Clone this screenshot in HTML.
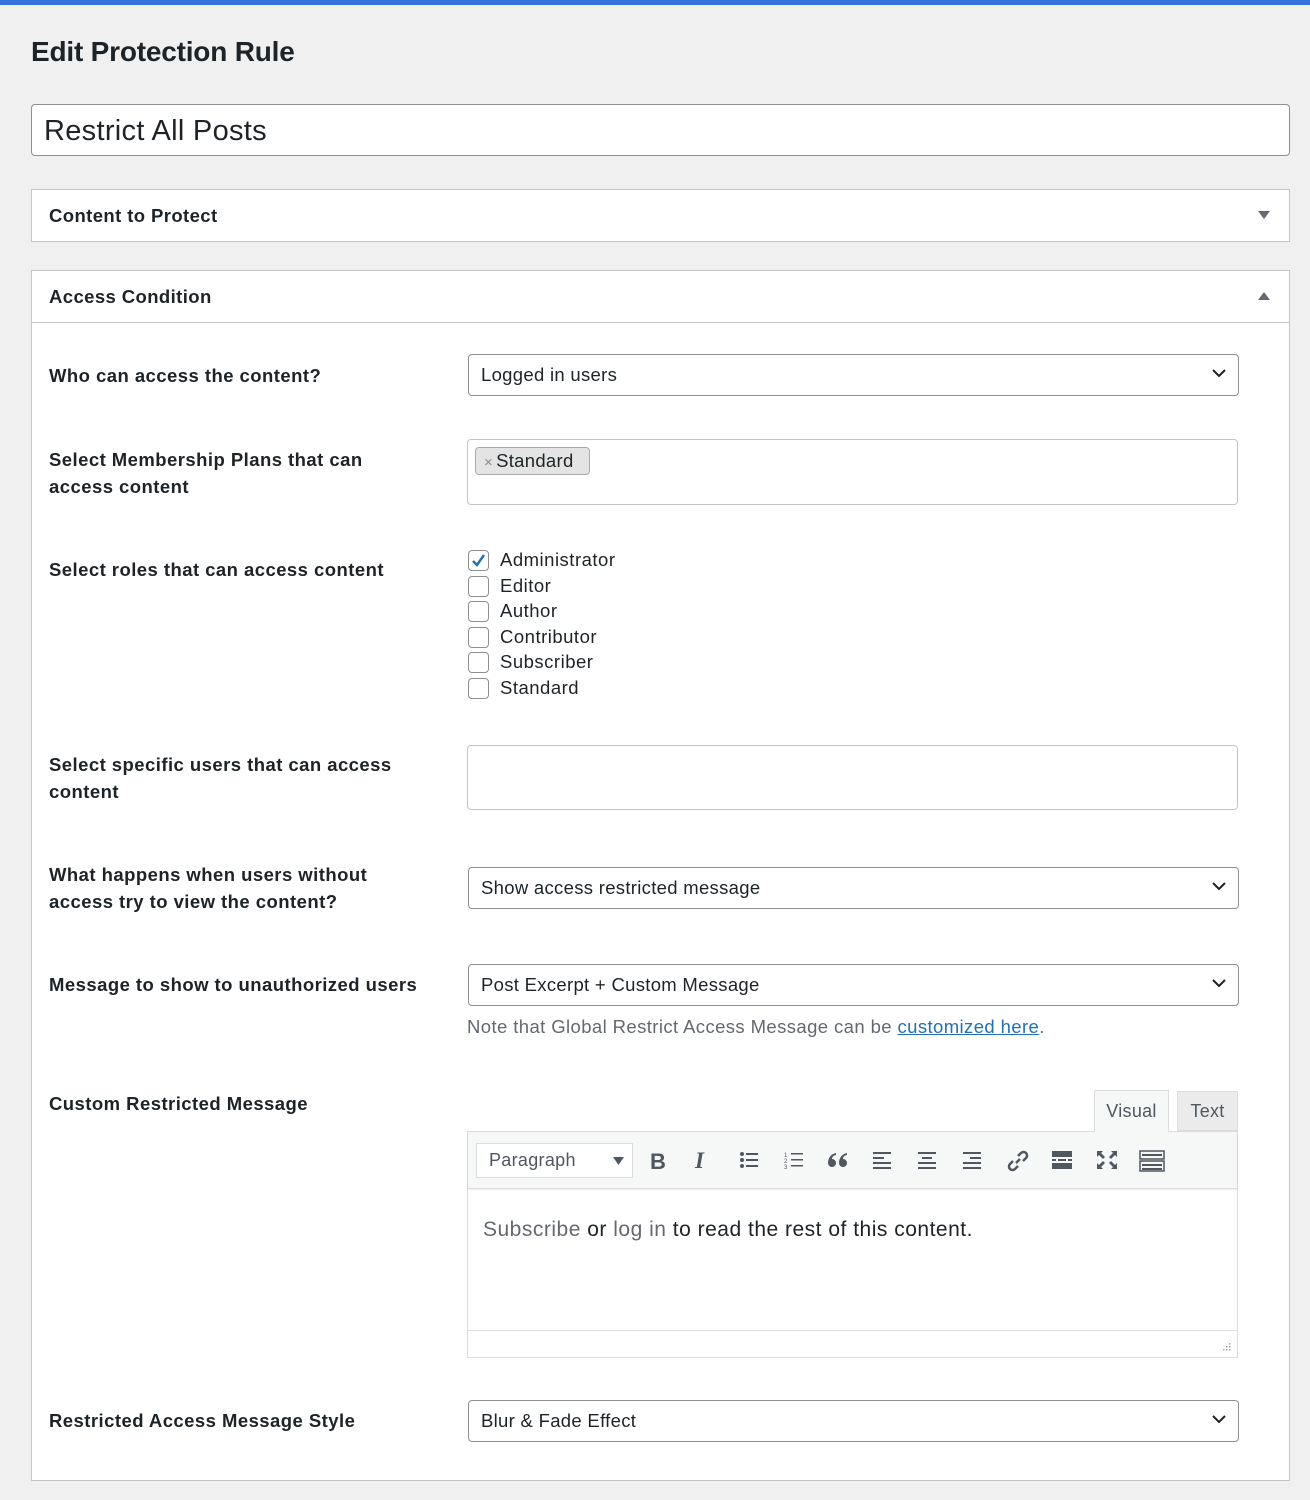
<!DOCTYPE html>
<html><head><meta charset="utf-8"><style>
*{box-sizing:border-box;margin:0;padding:0}
body{width:1310px;height:1500px;background:#f0f0f1;font-family:"Liberation Sans",sans-serif;color:#1d2327;position:relative;overflow:hidden;letter-spacing:0.3px}
.a{position:absolute}
.lbl{position:absolute;left:49px;font-size:18.5px;font-weight:bold;line-height:27px;color:#1d2327;letter-spacing:0.45px}
.sel{position:absolute;left:468px;width:771px;height:42px;border:1px solid #8c8f94;border-radius:4px;background:#fff;font-size:18.5px;padding:0 12px;line-height:40px}
.sel svg{position:absolute;right:12px;top:13px}
.box{position:absolute;left:467px;width:771px;border:1px solid #c3c4c7;border-radius:4px;background:#fff}
.cb{position:absolute;left:468px;width:21px;height:21px;border:1px solid #8c8f94;border-radius:4px;background:#fff}
.cbl{position:absolute;left:500px;font-size:18.5px;line-height:22px;letter-spacing:0.5px}
.tb svg{position:absolute;top:1150px}
</style></head><body>
<div class="a" style="left:0;top:0;width:1310px;height:5px;background:#3572de"></div>
<div class="a" style="left:31px;top:34px;font-size:28px;line-height:36px;font-weight:bold;letter-spacing:-0.2px">Edit Protection Rule</div>
<div class="a" style="left:31px;top:104px;width:1259px;height:52px;background:#fff;border:1px solid #8c8f94;border-radius:4px;font-size:29px;line-height:52px;padding-left:12px">Restrict All Posts</div>

<div class="a" style="left:31px;top:189px;width:1259px;height:53px;background:#fff;border:1px solid #c3c4c7"></div>
<div class="a" style="left:49px;top:202px;font-size:18.5px;line-height:27px;font-weight:bold;letter-spacing:0.4px">Content to Protect</div>
<svg class="a" style="left:1258px;top:211px" width="12" height="8"><path d="M0 0H12L6 8Z" fill="#646970"/></svg>

<div class="a" style="left:31px;top:270px;width:1259px;height:1211px;background:#fff;border:1px solid #c3c4c7"></div>
<div class="a" style="left:32px;top:322px;width:1257px;height:1px;background:#c3c4c7"></div>
<div class="a" style="left:49px;top:283px;font-size:18.5px;line-height:27px;font-weight:bold;letter-spacing:0.4px">Access Condition</div>
<svg class="a" style="left:1258px;top:292px" width="12" height="8"><path d="M0 8H12L6 0Z" fill="#646970"/></svg>

<div class="lbl" style="top:362px">Who can access the content?</div>
<div class="sel" style="top:354px">Logged in users<svg width="14" height="10"><path d="M1 2L7 8L13 2" stroke="#1d2327" stroke-width="2" fill="none"/></svg></div>

<div class="lbl" style="top:446px">Select Membership Plans that can<br>access content</div>
<div class="box" style="top:439px;height:66px"></div>
<div class="a" style="left:475px;top:447px;width:115px;height:28px;background:#e4e4e4;border:1px solid #aaa;border-radius:4px;font-size:18.5px;line-height:26px;padding-left:8px"><span style="color:#888;font-size:15px;margin-right:3px">×</span>Standard</div>

<div class="lbl" style="top:556px">Select roles that can access content</div>
<div class="cb" style="top:550px"><svg width="19" height="19" style="position:absolute;left:0;top:0"><path d="M4 10L8 14L15 4" stroke="#2271b1" stroke-width="2.5" fill="none"/></svg></div>
<div class="cbl" style="top:549px">Administrator</div>
<div class="cb" style="top:576px"></div><div class="cbl" style="top:575px">Editor</div>
<div class="cb" style="top:601px"></div><div class="cbl" style="top:600px">Author</div>
<div class="cb" style="top:627px"></div><div class="cbl" style="top:626px">Contributor</div>
<div class="cb" style="top:652px"></div><div class="cbl" style="top:651px">Subscriber</div>
<div class="cb" style="top:678px"></div><div class="cbl" style="top:677px">Standard</div>

<div class="lbl" style="top:751px">Select specific users that can access<br>content</div>
<div class="box" style="top:745px;height:65px"></div>

<div class="lbl" style="top:861px">What happens when users without<br>access try to view the content?</div>
<div class="sel" style="top:867px">Show access restricted message<svg width="14" height="10"><path d="M1 2L7 8L13 2" stroke="#1d2327" stroke-width="2" fill="none"/></svg></div>

<div class="lbl" style="top:971px">Message to show to unauthorized users</div>
<div class="sel" style="top:964px">Post Excerpt + Custom Message<svg width="14" height="10"><path d="M1 2L7 8L13 2" stroke="#1d2327" stroke-width="2" fill="none"/></svg></div>
<div class="a" style="left:467px;top:1014px;font-size:18.5px;line-height:26px;color:#646970;letter-spacing:0.4px">Note that Global Restrict Access Message can be <span style="color:#2271b1;text-decoration:underline">customized here</span>.</div>

<div class="lbl" style="top:1090px">Custom Restricted Message</div>
<div class="a" style="left:1094px;top:1090px;width:75px;height:42px;background:#f6f7f7;border:1px solid #dcdcde;border-bottom:none;font-size:18px;line-height:40px;text-align:center;color:#50575e;z-index:2">Visual</div>
<div class="a" style="left:1177px;top:1091px;width:61px;height:40px;background:#ebebeb;border:1px solid #dcdcde;font-size:18px;line-height:38px;text-align:center;color:#50575e">Text</div>
<div class="a" style="left:467px;top:1131px;width:771px;height:227px;border:1px solid #dcdcde;background:#fff"></div>
<div class="a" style="left:468px;top:1132px;width:769px;height:57px;background:#f6f7f7;border-bottom:1px solid #dcdcde;box-shadow:0 1px 2px rgba(0,0,0,.08)"></div>
<div class="a" style="left:476px;top:1143px;width:157px;height:35px;background:#fff;border:1px solid #dcdcde;font-size:18px;line-height:33px;padding-left:12px;color:#50575e">Paragraph<svg width="11" height="8" style="position:absolute;right:8px;top:13px"><path d="M0 0H11L5.5 8Z" fill="#50575e"/></svg></div>
<div class="a" style="left:650px;top:1149px;font-size:22px;font-weight:bold;color:#50575e">B</div>
<div class="a" style="left:695px;top:1148px;font-size:23px;font-style:italic;font-weight:bold;font-family:'Liberation Serif',serif;color:#50575e">I</div>
<div class="tb" style="color:#50575e">
<svg style="left:739px" width="20" height="20"><g fill="#50575e"><circle cx="3" cy="4" r="2"/><circle cx="3" cy="10" r="2"/><circle cx="3" cy="16" r="2"/><rect x="7" y="3" width="12" height="2"/><rect x="7" y="9" width="12" height="2"/><rect x="7" y="15" width="12" height="2"/></g></svg>
<svg style="left:784px" width="20" height="20"><g fill="#50575e"><text x="0" y="7" font-size="6">1</text><text x="0" y="13" font-size="6">2</text><text x="0" y="19" font-size="6">3</text><rect x="7" y="3" width="12" height="1.5"/><rect x="7" y="9" width="12" height="1.5"/><rect x="7" y="15" width="12" height="1.5"/></g></svg>
<svg style="left:827px;top:1151px" width="22" height="18"><g fill="#50575e"><path d="M9 2C4 3 1 7 1 12a4 4 0 1 0 4-4C5 6 7 4 9 4Z"/><path d="M20 2C15 3 12 7 12 12a4 4 0 1 0 4-4C16 6 18 4 20 4Z"/></g></svg>
<svg style="left:872px" width="20" height="20"><g fill="#50575e"><rect x="1" y="2" width="18" height="2"/><rect x="1" y="7" width="11" height="2"/><rect x="1" y="12" width="18" height="2"/><rect x="1" y="17" width="18" height="2"/></g></svg>
<svg style="left:917px" width="20" height="20"><g fill="#50575e"><rect x="1" y="2" width="18" height="2"/><rect x="5" y="7" width="10" height="2"/><rect x="1" y="12" width="18" height="2"/><rect x="1" y="17" width="18" height="2"/></g></svg>
<svg style="left:962px" width="20" height="20"><g fill="#50575e"><rect x="1" y="2" width="18" height="2"/><rect x="8" y="7" width="11" height="2"/><rect x="1" y="12" width="18" height="2"/><rect x="1" y="17" width="18" height="2"/></g></svg>
<svg style="left:1007px" width="22" height="22"><g stroke="#50575e" stroke-width="2.5" fill="none"><path d="M9 13L13 9"/><path d="M11 6L14 3a3.5 3.5 0 0 1 5 5L16 11"/><path d="M11 16L8 19a3.5 3.5 0 0 1-5-5L6 11"/></g></svg>
<svg style="left:1052px" width="20" height="20"><g fill="#50575e"><rect x="0" y="1" width="20" height="6"/><rect x="0" y="9" width="4" height="2"/><rect x="6" y="9" width="8" height="2"/><rect x="16" y="9" width="4" height="2"/><rect x="0" y="13" width="20" height="6"/></g></svg>
<svg style="left:1096px" width="22" height="20"><g fill="#50575e"><path d="M1 1H7L5 3L9 7L7 9L3 5L1 7Z"/><path d="M21 1H15L17 3L13 7L15 9L19 5L21 7Z"/><path d="M1 19H7L5 17L9 13L7 11L3 15L1 13Z"/><path d="M21 19H15L17 17L13 13L15 11L19 15L21 13Z"/></g></svg>
<svg style="left:1139px" width="26" height="22"><g fill="none" stroke="#50575e" stroke-width="1.5"><rect x="1" y="1" width="24" height="8"/><rect x="1" y="11" width="24" height="10"/></g><g fill="#50575e"><rect x="3" y="4" width="20" height="2"/><rect x="3" y="14" width="20" height="2"/><rect x="3" y="18" width="20" height="2"/></g></svg>
</div>
<div class="a" style="left:483px;top:1216px;font-size:21px;line-height:28px;color:#1d2327;letter-spacing:0.5px"><span style="color:#646970">Subscribe</span> or <span style="color:#646970">log in</span> to read the rest of this content.</div>
<div class="a" style="left:468px;top:1330px;width:769px;height:27px;border-top:1px solid #dcdcde;background:#fff"></div>
<svg class="a" style="left:1219px;top:1341px" width="12" height="12"><g fill="#aaa"><rect x="10" y="2" width="1.5" height="1.5"/><rect x="7" y="5" width="1.5" height="1.5"/><rect x="10" y="5" width="1.5" height="1.5"/><rect x="4" y="8" width="1.5" height="1.5"/><rect x="7" y="8" width="1.5" height="1.5"/><rect x="10" y="8" width="1.5" height="1.5"/></g></svg>

<div class="lbl" style="top:1407px">Restricted Access Message Style</div>
<div class="sel" style="top:1400px">Blur &amp; Fade Effect<svg width="14" height="10"><path d="M1 2L7 8L13 2" stroke="#1d2327" stroke-width="2" fill="none"/></svg></div>
</body></html>
